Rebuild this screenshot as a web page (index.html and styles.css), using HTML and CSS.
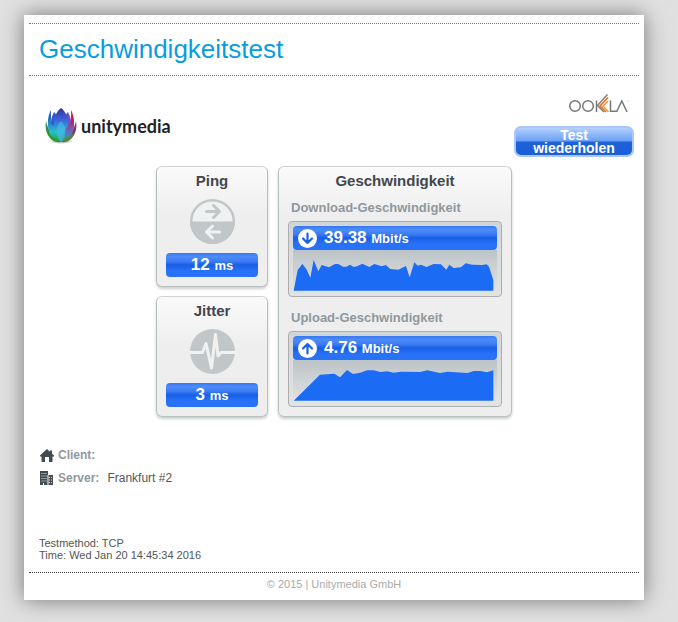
FILE: index.html
```html
<!DOCTYPE html>
<html lang="de">
<head>
<meta charset="utf-8">
<title>Geschwindigkeitstest</title>
<link rel="stylesheet" href="styles.css">
</head>
<body>
<main class="page">
  <header class="title-bar"><h1>Geschwindigkeitstest</h1></header>

  <section class="brands">
    <div class="unity">
      <svg class="lotus" viewBox="0 0 32 38" aria-hidden="true">
        <defs>
          <linearGradient id="core" x1="0" y1="0" x2="0" y2="1"><stop offset="0" stop-color="#3431a0"/><stop offset=".35" stop-color="#3b62d6"/><stop offset=".7" stop-color="#2bb6dc"/><stop offset="1" stop-color="#1fa56b"/></linearGradient>
          <linearGradient id="leftPetal" x1="0" y1="0" x2="0" y2="1"><stop offset="0" stop-color="#2746c4"/><stop offset=".5" stop-color="#1d9bc0"/><stop offset="1" stop-color="#3aa82e"/></linearGradient>
          <linearGradient id="rightPetal" x1="0" y1="0" x2="0" y2="1"><stop offset="0" stop-color="#d81f3f"/><stop offset=".5" stop-color="#a32a74"/><stop offset="1" stop-color="#3c7f38"/></linearGradient>
          <linearGradient id="leftFront" x1="0" y1="0" x2="0" y2="1"><stop offset="0" stop-color="#2b7fd6"/><stop offset=".5" stop-color="#27c0c4"/><stop offset="1" stop-color="#25a03a"/></linearGradient>
          <linearGradient id="rightFront" x1="0" y1="0" x2="0" y2="1"><stop offset="0" stop-color="#b22c6c"/><stop offset=".5" stop-color="#5b72c4"/><stop offset="1" stop-color="#2fa56c"/></linearGradient>
          <radialGradient id="ground"><stop offset="0" stop-color="#444" stop-opacity=".7"/><stop offset="1" stop-color="#444" stop-opacity="0"/></radialGradient>
        </defs>
        <ellipse cx="16" cy="34" rx="12" ry="3" fill="url(#ground)"/>
        <path d="M1 14C-1 26 5 34 15 35C8 29 3 24 1 14Z" fill="#2f8a45"/>
        <path d="M31 14C33 26 27 34 17 35C24 29 29 24 31 14Z" fill="#8b3052"/>
        <path d="M6 3C1 12 1 27 14 35C10 24 5 16 6 3Z" fill="url(#leftPetal)"/>
        <path d="M26 3C31 12 31 27 18 35C22 24 27 16 26 3Z" fill="url(#rightPetal)"/>
        <path d="M9 5C3 16 7 29 16 35L20 17Z" fill="#3a55d0"/>
        <path d="M23 5C29 16 25 29 16 35L12 17Z" fill="#6a50c4"/>
        <path d="M16 1C6 9 7 24 16 34C25 24 26 9 16 1Z" fill="url(#core)"/>
        <path d="M3 15C9 18 15 24 16 35C6 34 3 26 3 15Z" fill="url(#leftFront)"/>
        <path d="M29 15C23 18 17 24 16 35C26 34 29 26 29 15Z" fill="url(#rightFront)"/>
        <path d="M16 14C10 20 10 29 16 35C22 29 22 20 16 14Z" fill="#45bde6" opacity=".65"/>
        <path d="M2 25C5 29 10 31 16 35C9 36 4 32 2 25Z" fill="#2d9c31"/>
        <path d="M30 25C27 29 22 31 16 35C23 36 28 32 30 25Z" fill="#55873a"/>
      </svg>
      <span class="wordmark">unitymedia</span>
    </div>
    <div class="actions">
      <svg class="ookla" viewBox="0 0 60 20" role="img" aria-label="OOKLA">
        <g fill="none" stroke="#777" stroke-width="1.500">
          <ellipse cx="6" cy="12" rx="5.300" ry="5.300"/>
          <ellipse cx="19" cy="12" rx="5.300" ry="5.300"/>
          <path d="M27.500 6.500V18M41.500 6.500V17.200H47.500M47.500 18L52.800 7L58 18"/>
        </g>
        <path d="M38.500 .5L28.500 11.500L35 18" fill="none" stroke="#8a8178" stroke-width="1.500"/>
        <path d="M39 3.500L31 12L37 18" fill="none" stroke="#e8702f" stroke-width="1.700"/>
        <path d="M39 7L34 12.200L39.500 18" fill="none" stroke="#f3a04a" stroke-width="1.700"/>
        <circle cx="59" cy="7" r=".5" fill="#999"/>
      </svg>
      <button class="again" type="button">Test wiederholen</button>
    </div>
  </section>

  <section class="results">
    <article class="card small">
      <h2>Ping</h2>
      <svg class="dial" viewBox="0 0 45 45" aria-hidden="true">
        <circle cx="22.500" cy="22.500" r="21.300" fill="#f0f1f1" stroke="#c1c7c8" stroke-width="2.400"/>
        <path d="M0 22.500H45A22.500 22.500 0 0 1 0 22.500Z" fill="#c1c7c8"/>
        <g fill="none" stroke-width="3" stroke-linecap="round" stroke-linejoin="round"><path d="M16.500 12.500H29M23.500 6.500L29.500 12.500L23.500 18.500" stroke="#c1c7c8"/><path d="M29.500 33H17M22.500 27L16.500 33L22.500 39" stroke="#f0f1f1"/></g>
      </svg>
      <p class="value">12 <small>ms</small></p>
    </article>
    <article class="card speed">
      <h2>Geschwindigkeit</h2>
      <h3>Download-Geschwindigkeit</h3>
      <div class="panel">
        <p class="value rate">
          <svg viewBox="0 0 19 19" aria-hidden="true"><circle cx="9.500" cy="9.500" r="9.500" fill="#fff"/><path d="M9.500 4.500V14M5 9.500L9.500 14L14 9.500" fill="none" stroke="#1c62e8" stroke-width="2.200" stroke-linecap="round" stroke-linejoin="round"/></svg>
          <span>39.38 <small>Mbit/s</small></span>
        </p>
        <svg class="chart" viewBox="54 270 612 123" preserveAspectRatio="none" aria-hidden="true"><path d="M56 392L68 330L82 312L94 327L106 353L116 300L130 334L140 315L162 322L180 312L190 312L204 320L214 320L225 314L236 321L248 318L262 311L283 321L298 312L320 319L332 315L346 327L370 329L393 318L404 352L418 307L428 317L438 314L454 321L476 312L498 313L514 329L523 314L536 324L558 322L572 310L592 314L622 315L635 313L642 320L655 360V392Z"/></svg>
      </div>
      <h3>Upload-Geschwindigkeit</h3>
      <div class="panel">
        <p class="value rate">
          <svg viewBox="0 0 19 19" aria-hidden="true"><circle cx="9.500" cy="9.500" r="9.500" fill="#fff"/><path d="M9.500 14.500V5M5 9.500L9.500 5L14 9.500" fill="none" stroke="#1c62e8" stroke-width="2.200" stroke-linecap="round" stroke-linejoin="round"/></svg>
          <span>4.76 <small>Mbit/s</small></span>
        </p>
        <svg class="chart" viewBox="54 180 612 123" preserveAspectRatio="none" aria-hidden="true"><path d="M56 302L135 224L178 221L195 232L216 210L234 222L256 218L276 211L296 211L316 216L336 214L356 218L378 215L436 216L457 211L495 219L518 215L578 219L596 213L616 213L636 217L655 211V302Z"/></svg>
      </div>
    </article>
    <article class="card small">
      <h2>Jitter</h2>
      <svg class="dial" viewBox="0 0 45 45" aria-hidden="true">
        <circle cx="22.500" cy="22.500" r="22.500" fill="#c1c7c8"/>
        <path d="M0 23.500H12.500L16 14.500L21.500 39L25.500 5.500L28 27L31 23.500H45" fill="none" stroke="#f0f1f1" stroke-width="3" stroke-linejoin="round"/>
      </svg>
      <p class="value">3 <small>ms</small></p>
    </article>
  </section>

  <dl class="info">
    <div>
      <svg viewBox="0 0 14 14" aria-hidden="true"><path d="M7 1L0 7.500V8.500H1.500V14H5V9H9V14H12.500V8.500H14V7.500L12 5.600V2.500H10V3.800Z" fill="#444b50"/></svg>
      <dt>Client:</dt><dd></dd>
    </div>
    <div>
      <svg viewBox="0 0 14 14" aria-hidden="true"><path d="M0 0H8V4H13V14H0Z" fill="#444b50"/><path d="M8 4V14M3.500 12V14" stroke="#fff"/><path d="M1.500 2.500H2.500M3.500 2.500H4.500M5.500 2.500H6.500M1.500 5H2.500M3.500 5H4.500M5.500 5H6.500M1.500 7.500H2.500M3.500 7.500H4.500M5.500 7.500H6.500M1.500 10H2.500M3.500 10H4.500M5.500 10H6.500M9 6.500H10M11 6.500H12M9 9H10M11 9H12M9 11.500H10M11 11.500H12" stroke="#ddd"/></svg>
      <dt>Server:</dt><dd>Frankfurt #2</dd>
    </div>
  </dl>

  <p class="meta">Testmethod: TCP<br>Time: Wed Jan 20 14:45:34 2016</p>
  <footer class="foot">© 2015 | Unitymedia GmbH</footer>
</main>
</body>
</html>
```
FILE: styles.css
```css
* { box-sizing: border-box; }
body, h1, h2, h3, p, dl, dd { margin: 0; }

body {
  padding: 15px 34px 22px 24px;
  background: #e0e0e0;
  color: #555;
  font-family: "Liberation Sans", Arial, sans-serif;
  font-size: 12px;
}
svg { display: block; flex: none; }

.page {
  padding: 8px 5px 9px;
  background: #fff;
  box-shadow: 0 0 20px #777;
}

.title-bar {
  padding: 10px;
  border: dotted #0a9be0;
  border-width: 1px 0;
}
h1 {
  color: #0a9ce0;
  font-size: 26px;
  font-weight: normal;
  line-height: 31px;
}

.brands {
  display: flex;
  justify-content: space-between;
  height: 90px;
  padding: 18px 5px 0 16px;
}
.unity {
  display: flex;
  align-items: center;
  gap: 4px;
  height: 64px;
}
.lotus { width: 32px; height: 38px; }
.wordmark {
  color: #222;
  font: bold 18px Lato, sans-serif;
}
.actions {
  display: flex;
  flex-direction: column;
  align-items: flex-end;
  gap: 12px;
}
.ookla { width: 60px; height: 20px; margin-right: 5px; }
.again {
  width: 120px;
  height: 31px;
  padding: 0 10px;
  border: 2px solid #a9c8fa;
  border-radius: 7px;
  background: linear-gradient(#b4d0fd, #6ba0f5 48%, #1e62da 52%, #1b5fd6);
  color: #fff;
  font: bold 14px/13px "Liberation Sans", Arial, sans-serif;
}

.results {
  display: grid;
  grid-template-columns: 112px 234px;
  grid-template-rows: 1fr 1fr;
  justify-content: center;
  gap: 9px 10px;
}
.card {
  padding: 5px 9px 9px;
  border: 1px solid #b9c0c2;
  border-top-color: #d0d4d4;
  border-radius: 6px;
  background: linear-gradient(#fafafa, #eee 50px);
  box-shadow: 0 2px 3px #ccc;
}
.small { display: flex; flex-direction: column; align-items: center; }
.speed { grid-column: 2; grid-row: 1 / 3; }
h2 {
  color: #42474b;
  font-size: 15px;
  line-height: 18px;
  text-align: center;
}
.dial { width: 45px; height: 45px; margin: 9px 0; }
.value {
  width: 100%;
  height: 24px;
  border-radius: 4px;
  background: linear-gradient(#3478f3, #4e8bfa 15%, #3b7bf4 35%, #175fe6 50%, #2872f8 75%, #2872f8);
  color: #fff;
  font-size: 17px;
  font-weight: bold;
  line-height: 24px;
  text-align: center;
}
.value small { font-size: 13px; }

h3 {
  margin: 10px 0 0 3px;
  color: #8f989d;
  font-size: 13px;
  line-height: 16px;
}
.panel {
  margin-top: 5px;
  padding: 4px 4px 5px;
  border: 1px solid #aaaeb0;
  border-radius: 4px;
  background: linear-gradient(#d2d5d6, #e2e3e3);
}
.panel + h3 { margin-top: 13px; }
.rate {
  display: flex;
  align-items: center;
  gap: 7px;
  padding-left: 5px;
  text-align: left;
}
.rate svg { width: 19px; height: 19px; }
.chart {
  width: 100%;
  height: 41px;
  background: linear-gradient(#bcc3c6, #e0e2e3);
  fill: #1b6bf5;
}

.info {
  display: grid;
  gap: 7px;
  padding: 30px 11px 0;
}
.info div { display: flex; align-items: center; height: 16px; }
.info svg { width: 14px; height: 14px; }
dt { margin: 0 8px 0 4px; color: #8f999e; font-weight: bold; }

.meta {
  padding: 51px 10px 11px;
  font-size: 11px;
  line-height: 12px;
}
.foot {
  padding-top: 5px;
  border-top: 1px dotted #444;
  color: #aaa;
  font-size: 11px;
  line-height: 13px;
  text-align: center;
}
```
